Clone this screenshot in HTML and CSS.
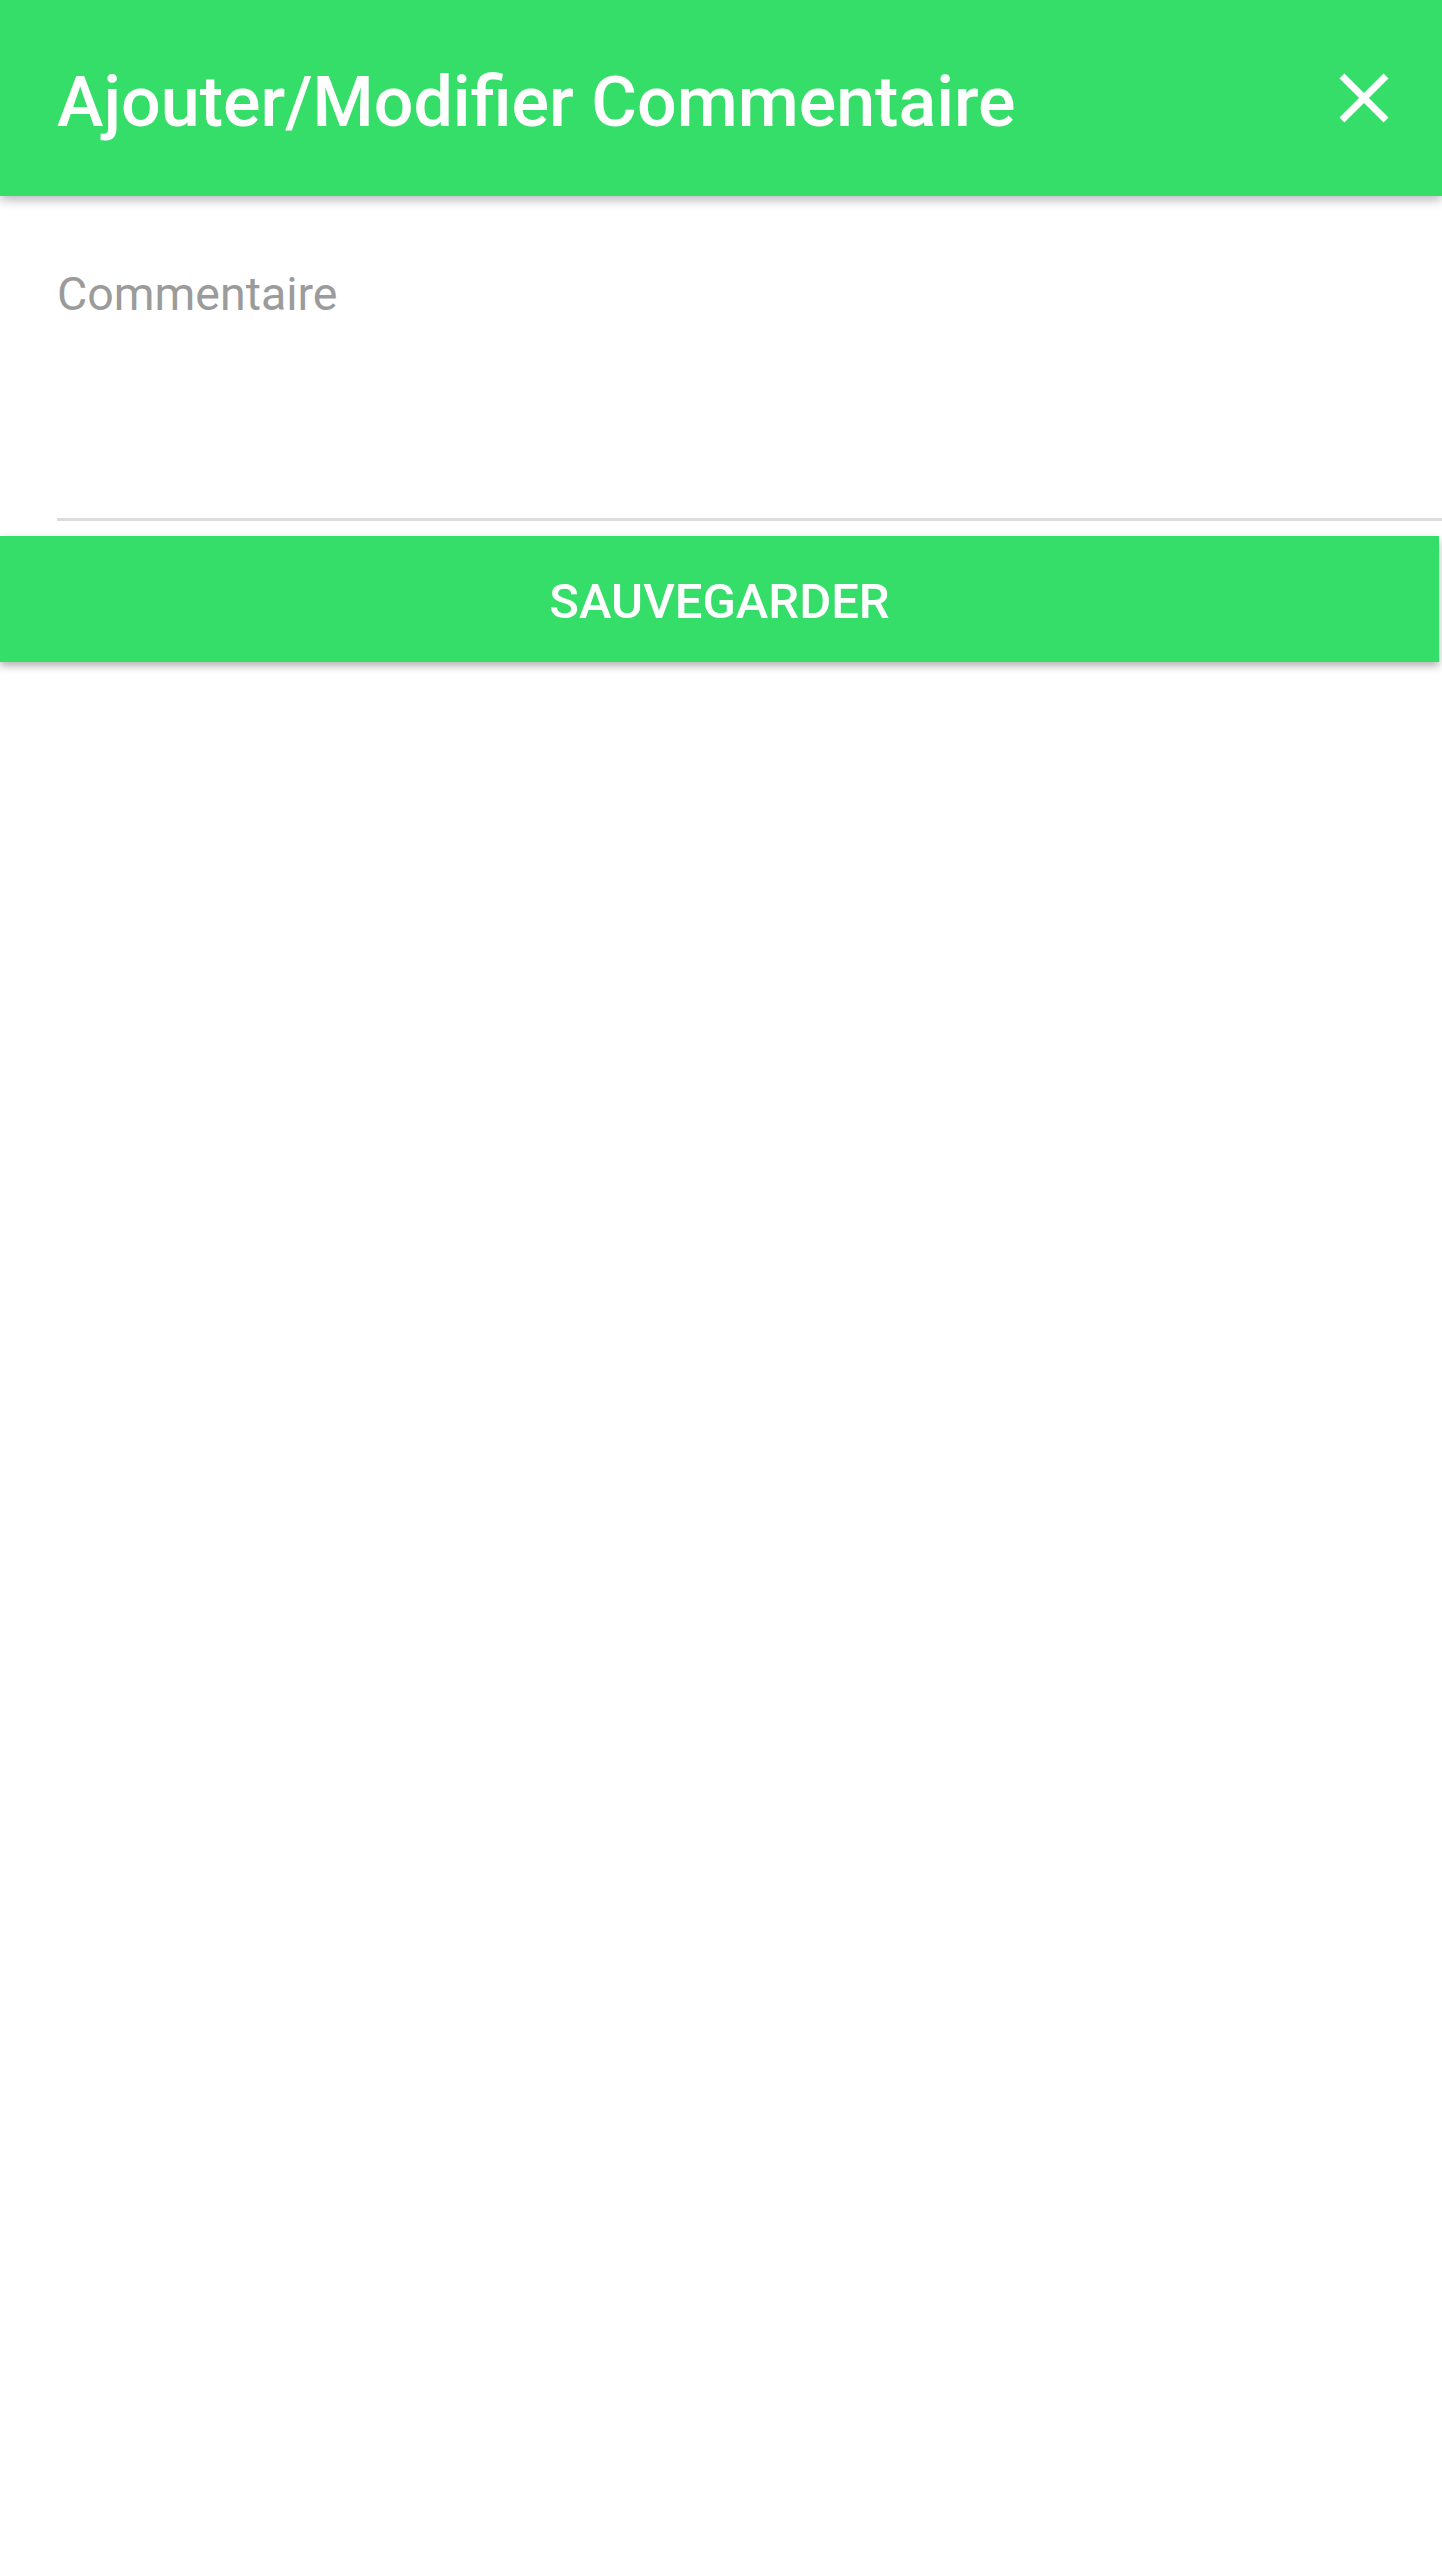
FILE: index.html
```html
<!DOCTYPE html>
<html lang="fr">
<head>
<meta charset="utf-8">
<title>Ajouter/Modifier Commentaire</title>
<link rel="stylesheet" href="styles.css">
</head>
<body>
<header class="toolbar">
  <h1 class="toolbar-title">Ajouter/Modifier Commentaire</h1>
  <button class="close-btn" aria-label="Fermer">
    <svg viewBox="0 0 24 24" width="84" height="84"><path fill="#ffffff" d="M19 6.41L17.59 5 12 10.59 6.41 5 5 6.41 10.59 12 5 17.59 6.41 19 12 13.41 17.59 19 19 17.59 13.41 12z"/></svg>
  </button>
</header>
<main class="content">
  <div class="field">
    <span class="field-hint">Commentaire</span>
  </div>
  <button class="save-btn">SAUVEGARDER</button>
</main>
</body>
</html>
```

FILE: styles.css
```css
html, body {
  margin: 0;
  padding: 0;
  background: #ffffff;
}
body {
  font-family: Roboto, "Noto Sans", "Liberation Sans", sans-serif;
  width: 1442px;
  min-height: 2562px;
  overflow: hidden;
}
.toolbar {
  position: relative;
  z-index: 2;
  height: 196px;
  box-sizing: border-box;
  background: #35dd69;
  display: flex;
  align-items: center;
  padding-left: 57px;
  padding-right: 36px;
  box-shadow: 0 4px 10px rgba(0, 0, 0, 0.28);
}
.toolbar-title {
  flex: 1;
  margin: 8px 0 0 0;
  font-size: 70px;
  line-height: 70px;
  font-weight: 500;
  color: #ffffff;
  white-space: nowrap;
}
.close-btn {
  width: 84px;
  height: 84px;
  padding: 0;
  border: none;
  background: transparent;
  display: flex;
}
.content {
  position: relative;
  z-index: 1;
}
.field {
  margin-left: 57px;
  height: 325px;
  box-sizing: border-box;
  padding-top: 74px;
  border-bottom: 3px solid #dcdcdc;
}
.field-hint {
  display: block;
  font-size: 46.5px;
  line-height: 48px;
  color: #9b9b9b;
}
.save-btn {
  display: flex;
  align-items: center;
  justify-content: center;
  width: 1439px;
  height: 126px;
  margin: 15px 0 0 0;
  padding: 4px 0 0 0;
  box-sizing: border-box;
  border: none;
  background: #35dd69;
  color: #ffffff;
  font-family: Roboto, "Noto Sans", "Liberation Sans", sans-serif;
  font-size: 49px;
  font-weight: 500;
  line-height: 49px;
  box-shadow: 0 4px 8px rgba(0, 0, 0, 0.3);
}
```
